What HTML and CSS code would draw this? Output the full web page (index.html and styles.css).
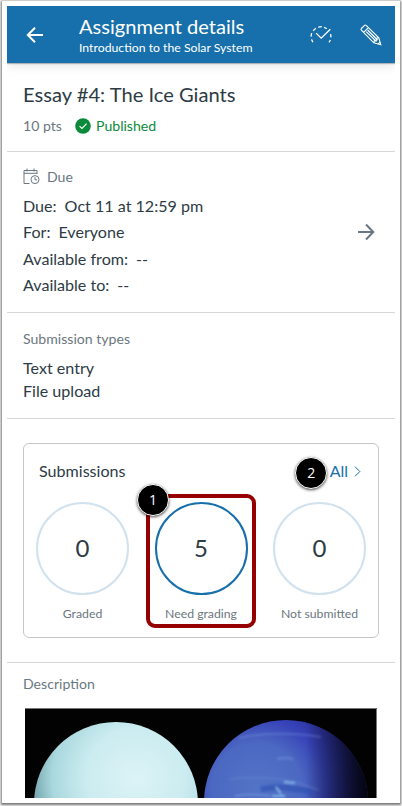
FILE: index.html
```html
<!DOCTYPE html>
<html lang="en">
<head>
    <meta charset="UTF-8">
    <meta name="viewport" content="width=device-width, initial-scale=1.0">
    <title>Assignment details</title>
    <link rel="stylesheet" href="styles.css">
</head>
<body>
    <div class="frame">
        <div class="screen">
            <header class="toolbar">
                <svg class="back" width="18" height="18" viewBox="0 0 18 18">
                    <path d="M17 9H2M9 1.7L1.8 9L9 16.3"/>
                </svg>
                <div class="toolbar-text">
                    <h1>Assignment details</h1>
                    <p>Introduction to the Solar System</p>
                </div>
                <svg class="speed" width="22" height="20" viewBox="0 0 22 20">
                    <path d="M2.9 17.2L1.5 14.4M1 11.6L1.6 8.2M3.2 5.7L5.8 3.2M8.2 2.1L11.8 1.7M14 2.2L16.8 3.7M20.6 9.2L21 12.4M20.4 15L19 17.4"/>
                    <path d="M6.2 8.3L11.2 13.2L20.3 4.3"/>
                </svg>
                <svg class="pencil" width="22" height="22" viewBox="0 0 22 22">
                    <path d="M1.4 4.5L4.5 1.4Q5.3 .7 6.1 1.4L18.8 13.8L20.8 20.8L13.8 18.8L1.4 6.2Q.7 5.3 1.4 4.5ZM3.7 8.4L8.4 3.7M6.2 7.6L16.4 17.5M7.6 6L17.6 16M13.8 18.8L14.5 16L16.4 16.2L16.2 14.2L18.8 13.8M18.2 20L20 18.2"/>
                </svg>
            </header>

            <section class="summary">
                <h2>Essay #4: The Ice Giants</h2>
                <div class="meta">
                    <span class="points">10 pts</span>
                    <svg width="16" height="16" viewBox="0 0 16 16">
                        <circle cx="8" cy="8" r="7.8" fill="#0b8a3c"/>
                        <path d="M4.5 8.2L7 10.5L11.6 5.7" fill="none" stroke="#fff" stroke-width="1.1"/>
                    </svg>
                    <span class="published">Published</span>
                </div>
            </section>

            <section class="due">
                <div class="due-body">
                    <div class="due-label">
                        <svg width="17" height="17" viewBox="0 0 17 17">
                            <path d="M6.5 15.5H1V2.5H14V6M1 5.3H14M4 .5V3.5M11 .5V3.5"/>
                            <circle cx="12" cy="11.6" r="4"/>
                            <path d="M12 9.2V11.8H14"/>
                        </svg>
                        <span>Due</span>
                    </div>
                    <dl>
                        <div><dt>Due:</dt><dd>Oct 11 at 12:59 pm</dd></div>
                        <div><dt>For:</dt><dd>Everyone</dd></div>
                        <div><dt>Available from:</dt><dd>--</dd></div>
                        <div><dt>Available to:</dt><dd>--</dd></div>
                    </dl>
                </div>
                <svg class="forward" width="18" height="18" viewBox="0 0 18 18">
                    <path d="M1 9H16M9 1.5L16.3 9L9 16.5"/>
                </svg>
            </section>

            <section class="types">
                <h3>Submission types</h3>
                <p>Text entry</p>
                <p>File upload</p>
            </section>

            <section class="submissions">
                <div class="card">
                    <div class="card-head">
                        <h4>Submissions</h4>
                        <a class="all">
                            <span class="badge badge-all">2</span>
                            All
                            <svg width="7" height="11" viewBox="0 0 7 11"><path d="M1 .7L5.8 5.5L1 10.3"/></svg>
                        </a>
                    </div>
                    <div class="stats">
                        <div class="stat">
                            <div class="ring">0</div>
                            <p>Graded</p>
                        </div>
                        <div class="stat active">
                            <div class="ring">5</div>
                            <p>Need grading</p>
                            <div class="highlight"></div>
                            <span class="badge badge-need">1</span>
                        </div>
                        <div class="stat">
                            <div class="ring">0</div>
                            <p>Not submitted</p>
                        </div>
                    </div>
                </div>
            </section>

            <section class="description">
                <h3>Description</h3>
                <svg class="planets" width="352" height="90" viewBox="0 0 352 90">
                    <defs>
                        <radialGradient id="uranus" cx=".62" cy=".34" r=".68">
                            <stop offset="0" stop-color="#dcf3f6"/>
                            <stop offset=".45" stop-color="#cbecf0"/>
                            <stop offset=".75" stop-color="#a9d8de"/>
                            <stop offset="1" stop-color="#5f9299"/>
                        </radialGradient>
                        <radialGradient id="neptune" gradientUnits="userSpaceOnUse" cx="232" cy="80" r="100">
                            <stop offset="0" stop-color="#5274c6"/>
                            <stop offset=".45" stop-color="#4c68c2"/>
                            <stop offset=".7" stop-color="#3743b8"/>
                            <stop offset="1" stop-color="#25298c"/>
                        </radialGradient>
                        <linearGradient id="shade">
                            <stop offset=".62" stop-color="#000" stop-opacity="0"/>
                            <stop offset=".85" stop-color="#000" stop-opacity=".55"/>
                            <stop offset="1" stop-color="#000" stop-opacity=".9"/>
                        </linearGradient>
                        <filter id="soft" x="-10%" y="-20%" width="120%" height="140%"><feGaussianBlur stdDeviation=".8"/></filter>
                    </defs>
                    <rect width="352" height="90" fill="#020202"/>
                    <circle cx="91" cy="96" r="82" fill="url(#uranus)"/>
                    <circle cx="261" cy="94" r="82" fill="url(#neptune)"/>
                    <circle cx="261" cy="94" r="82" fill="url(#shade)"/>
                    <g fill="none" stroke="#8fb2ee" filter="url(#soft)">
                        <path d="M214 30Q250 22 296 29" stroke-opacity=".35" stroke-width="1.500"/>
                        <path d="M252 51Q260 49 268 51" stroke-opacity=".35" stroke-width="2"/>
                        <path d="M205 71Q235 67 268 73L294 82" stroke-opacity=".2" stroke-width="1.500"/>
                        <path d="M236 82Q250 76 288 84" stroke="#2b4cae" stroke-opacity=".55" stroke-width="6"/>
                        <path d="M259 74L270 75M251 79L256 86M247 88H260" stroke="#a3e2ff" stroke-opacity=".8" stroke-width="1.300"/>
                        <path d="M210 88Q228 85 245 88" stroke-opacity=".5" stroke-width="1.500"/>
                    </g>
                    <path d="M0 .5H351.500V90" fill="none" stroke="#777"/>
                </svg>
            </section>
        </div>
    </div>
</body>
</html>
```

FILE: styles.css
```css
* {
    box-sizing: border-box;
}
body {
    font-family: Lato, sans-serif;
    margin: 0;
    padding: 1px 2px 3px;
    height: 806px;
    background-color: #f4f4f4;
    color: #2d3b45;
    overflow: hidden;
}
h1, h2, h3, h4, p, dl, dd {
    margin: 0;
    font-weight: normal;
}
svg {
    flex: none;
    display: block;
}
.frame {
    height: 802px;
    padding: 5px;
    background-color: #fff;
    box-shadow: 0 1px 2px 1px rgba(0, 0, 0, 0.5);
}
.screen {
    height: 792px;
    overflow: hidden;
}

/* Top bar */
.toolbar {
    position: relative;
    display: flex;
    align-items: center;
    height: 57px;
    padding: 0 13px 0 19px;
    background-color: #1770ab;
    color: #fff;
    box-shadow: 0 1px 1px rgba(0, 0, 0, 0.25), 0 3px 10px rgba(0, 0, 0, 0.1);
}
.toolbar svg {
    fill: none;
    stroke: #fff;
}
.toolbar .back {
    stroke-width: 2;
}
.toolbar-text {
    flex: 1;
    margin-left: 35px;
    padding-top: 3px;
    white-space: nowrap;
}
.toolbar h1 {
    font-size: 20.1px;
    line-height: 24px;
}
.toolbar p {
    font-size: 12.25px;
    line-height: 20px;
}
.speed {
    stroke-width: 1.3;
}
.pencil {
    margin-left: 28px;
    stroke-width: 1.1;
}

section {
    padding: 0 16px;
    border-bottom: 1px solid #d5d7d9;
}
h3 {
    font-size: 14.1px;
    line-height: 20px;
    color: #6b7780;
}

/* Title */
.summary {
    height: 89px;
    padding-top: 18px;
}
.summary h2 {
    font-size: 20.15px;
    line-height: 26px;
}
.meta {
    display: flex;
    align-items: center;
    margin-top: 9px;
    font-size: 14.1px;
    line-height: 20px;
}
.points {
    width: 52px;
    color: #6b7780;
}
.published {
    margin-left: 5px;
    color: #0b8a3c;
}

/* Due dates */
.due {
    display: flex;
    align-items: center;
    justify-content: space-between;
    height: 161px;
}
.due-label {
    display: flex;
    gap: 7px;
    font-size: 14.1px;
    line-height: 18px;
    color: #6b7780;
}
.due-label svg {
    fill: none;
    stroke: #6b7780;
}
.due-body {
    padding-top: 2px;
}
.due dl {
    margin-top: 7px;
    font-size: 16.1px;
    line-height: 26.2px;
}
.due dl div {
    display: flex;
    gap: 8px;
}
.forward {
    margin-right: 4px;
    fill: none;
    stroke: #6b7780;
    stroke-width: 2;
}

/* Submission types */
.types {
    height: 106px;
    padding-top: 16px;
}
.types h3 {
    margin-bottom: 7px;
}
.types p {
    font-size: 16.1px;
    line-height: 23px;
}

/* Submissions */
.submissions {
    height: 244px;
    padding-top: 24px;
}
.card {
    height: 195px;
    border: 1px solid #c3c7ca;
    border-radius: 6px;
}
.card-head {
    display: flex;
    justify-content: space-between;
    padding: 15px 17px 0 15px;
    line-height: 24px;
}
.card-head h4 {
    font-size: 16.1px;
}
.all {
    position: relative;
    display: flex;
    align-items: center;
    gap: 6px;
    color: #1770ab;
}
.all svg {
    fill: none;
    stroke: #1770ab;
}
.stats {
    display: flex;
    justify-content: space-between;
    padding: 19px 12px 0;
}
.stat {
    position: relative;
    width: 93px;
    text-align: center;
}
.ring {
    height: 93px;
    border: 2px solid #d1e2ee;
    border-radius: 50%;
    font-size: 24px;
    line-height: 88px;
}
.active .ring {
    border-color: #1770ab;
}
.stat p {
    margin: 10px -10px 0;
    font-size: 12.25px;
    line-height: 18px;
    color: #6b7780;
}

/* Callouts */
.highlight {
    position: absolute;
    top: -8px;
    left: -9px;
    width: 110px;
    height: 134px;
    border: 4px solid #960000;
    border-radius: 9px;
}
.badge {
    position: absolute;
    width: 32px;
    height: 32px;
    border: 1px solid #fff;
    border-radius: 50%;
    background-color: #000;
    box-shadow: 0 1px 3px rgba(0, 0, 0, 0.7);
    color: #fff;
    font-family: "Open Sans", sans-serif;
    font-size: 14px;
    line-height: 30px;
    text-align: center;
    text-indent: 1px;
}
.badge-need {
    top: -18px;
    left: -18px;
}
.badge-all {
    top: -2px;
    left: -35px;
}

/* Description */
.description {
    padding: 11px 18px 0;
    border: 0;
}
.description h3 {
    margin: 0 0 14px -2px;
}
```
